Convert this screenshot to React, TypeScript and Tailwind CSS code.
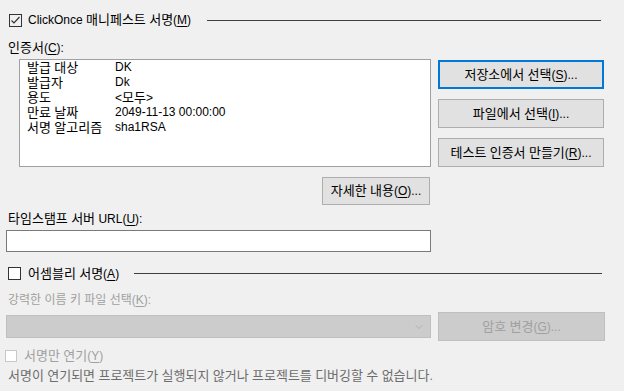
import { ChevronDown } from "lucide-react";

// Hangul runs get a slightly larger size so they match the width of the dialog's Korean font
function T({ s, small }: { s: string; small?: boolean }) {
  return (
    <>
      {s.split(/([\uAC00-\uD7A3]+)/).map((p, i) =>
        /[\uAC00-\uD7A3]/.test(p) ? (
          <span
            key={i}
            className={`font-['Noto_Sans_CJK_KR',sans-serif] leading-none ${small ? "text-[12px]" : "text-[13px]"}`}
          >
            {p}
          </span>
        ) : (
          <span key={i}>{p}</span>
        )
      )}
    </>
  );
}

function Key({ k }: { k: string }) {
  return (
    <>
      (<span className="underline underline-offset-2">{k}</span>)
    </>
  );
}

function Button({
  children,
  focused,
  disabled,
  className = "",
}: {
  children: React.ReactNode;
  focused?: boolean;
  disabled?: boolean;
  className?: string;
}) {
  let look = "border border-[#adadad] bg-[#e1e1e1] text-black";
  if (focused) look = "border-2 border-[#0078d7] bg-[#e1e1e1] text-black";
  if (disabled) look = "border border-[#bfbfbf] bg-[#cccccc] text-[#a0a0a0]";
  return (
    <div className={`flex items-center justify-center ${look} ${className}`}>
      <span className="whitespace-nowrap">{children}</span>
    </div>
  );
}

const certRows = [
  { label: "발급 대상", value: "DK" },
  { label: "발급자", value: "Dk" },
  { label: "용도", value: "<모두>" },
  { label: "만료 날짜", value: "2049-11-13 00:00:00" },
  { label: "서명 알고리즘", value: "sha1RSA" },
];

export default function App() {
  return (
    <div className="w-[624px] h-[391px] overflow-hidden bg-[#f0f0f0] text-[12px] leading-[15px] text-black font-['Liberation_Sans','Noto_Sans_CJK_KR',sans-serif]">
      {/* ClickOnce header */}
      <div className="flex items-center pt-[12px] pl-[9px] w-[601px]">
        <div className="w-[13px] h-[13px] border border-[#333333] bg-[#f0f0f0] flex items-center justify-center">
          <svg width="11" height="11" viewBox="0 0 11 11">
            <polyline points="1.5,5.5 4,8 9.5,2" fill="none" stroke="#333333" strokeWidth="1.2" />
          </svg>
        </div>
        <span className="ml-[6px] whitespace-nowrap">
          <T s="ClickOnce 매니페스트 서명" />
          <Key k="M" />
        </span>
        <div className="flex-1 ml-[16px] h-px bg-[#404040]" />
      </div>

      <div className="mt-[12px] pl-[8px] h-[15px]">
        <T s="인증서" />
        <Key k="C" />:
      </div>

      <div className="flex mt-[4px]">
        <div className="ml-[19px] w-[412px] h-[108px] border border-[#a0a0a0] bg-white pl-[7px]">
          {certRows.map((r) => (
            <div key={r.label} className="flex h-[15px] items-center">
              <span className="w-[88px] whitespace-nowrap">
                <T s={r.label} />
              </span>
              <span className="whitespace-nowrap">
                <T s={r.value} />
              </span>
            </div>
          ))}
        </div>
        <div className="ml-[7px] mt-[1px] w-[166px] flex flex-col gap-[10px]">
          <Button focused className="h-[29px]">
            <T s="저장소에서 선택" />
            <Key k="S" />...
          </Button>
          <Button className="h-[29px]">
            <T s="파일에서 선택" />
            <Key k="I" />...
          </Button>
          <Button className="h-[29px]">
            <T s="테스트 인증서 만들기" />
            <Key k="R" />...
          </Button>
        </div>
      </div>

      <div className="w-[430px] flex justify-end mt-[10px]">
        <Button className="w-[108px] h-[28px]">
          <T s="자세한 내용" />
          <Key k="O" />...
        </Button>
      </div>

      <div className="mt-[6px] pl-[8px] h-[15px]">
        <T s="타임스탬프 서버 URL" />
        <Key k="U" />:
      </div>
      <div className="mt-[4px] ml-[6px] w-[425px] h-[22px] border border-[#7a7a7a] bg-white" />

      {/* Assembly header */}
      <div className="flex items-center mt-[15px] pl-[8px] w-[602px] h-[13px]">
        <div className="w-[13px] h-[13px] border border-[#333333] bg-white" />
        <span className="ml-[7px] whitespace-nowrap">
          <T s="어셈블리 서명" />
          <Key k="A" />
        </span>
        <div className="flex-1 ml-[15px] h-px bg-[#404040]" />
      </div>

      <div className="mt-[13px] pl-[8px] h-[15px] text-[#a0a0a0]">
        <T s="강력한 이름 키 파일 선택" small />
        <Key k="K" />:
      </div>

      <div className="flex items-center mt-[4px] h-[29px]">
        <div className="ml-[6px] w-[425px] h-[23px] border border-[#bfbfbf] bg-[#cccccc] flex items-center justify-end pr-[5px]">
          <ChevronDown className="w-[12px] h-[12px] text-[#a0a0a0]" strokeWidth={1.2} />
        </div>
        <Button disabled className="ml-[7px] w-[167px] h-[29px]">
          <T s="암호 변경" />
          <Key k="G" />...
        </Button>
      </div>

      <div className="flex items-center mt-[9px] pl-[5px] h-[12px]">
        <div className="w-[12px] h-[12px] border border-[#c8c8c8] bg-white" />
        <span className="ml-[7px] text-[#a0a0a0] whitespace-nowrap">
          <T s="서명만 연기" />
          <Key k="Y" />
        </span>
      </div>

      <div className="mt-[6px] pl-[8px] h-[15px] text-[#6d6d6d] whitespace-nowrap">
        <T s="서명이 연기되면 프로젝트가 실행되지 않거나 프로젝트를 디버깅할 수 없습니다." />
      </div>
    </div>
  );
}
